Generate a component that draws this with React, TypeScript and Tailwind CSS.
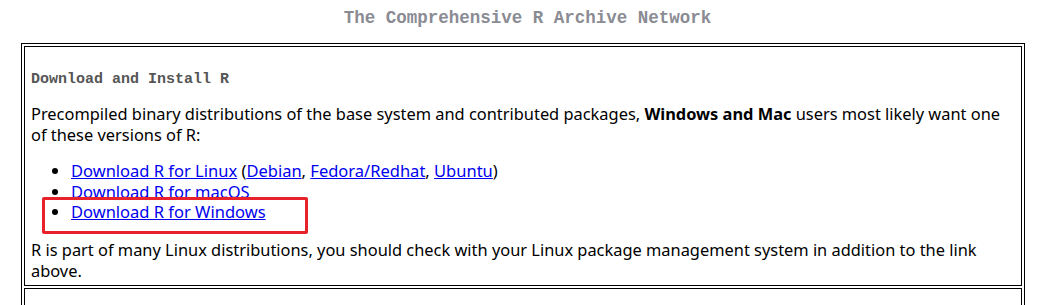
import React from "react"

const mono = "font-['Liberation_Mono','DejaVu_Sans_Mono',monospace]"
const sans = "font-['Noto_Sans','Open_Sans',sans-serif]"

const links = [
  { label: "Download R for Linux", extra: true },
  { label: "Download R for macOS" },
  { label: "Download R for Windows" },
]

function A({ children }: { children: React.ReactNode }) {
  return <a href="#" className="text-[#0000ee] underline">{children}</a>
}

export default function App() {
  return (
    <div className="min-h-screen bg-white text-black">
      <h1 className={`${mono} pt-[8px] text-center text-[17.5px] font-bold leading-[20px] text-[#8a8b93]`}>
        The Comprehensive R Archive Network
      </h1>

      <div className="ml-[21px] mt-[15px] w-[1004px] border border-black p-[2px]">
        <div className="relative border border-black px-[6px] pb-[4px] pt-[24px]">
          <h2 className={`${mono} text-[15px] font-bold leading-[18px] text-[#555]`}>
            Download and Install R
          </h2>

          <p className={`${sans} mt-[14px] text-[16.4px] leading-[21px]`}>
            Precompiled binary distributions of the base system and contributed packages,{" "}
            <b>Windows and Mac</b> users most likely want one of these versions of R:
          </p>

          <ul className={`${sans} mt-[16px] list-disc pl-[40px] text-[16.5px] leading-[20.5px]`}>
            {links.map((l) => (
              <li key={l.label}>
                <A>{l.label}</A>
                {l.extra && (
                  <>
                    {" "}(<A>Debian</A>, <A>Fedora/Redhat</A>, <A>Ubuntu</A>)
                  </>
                )}
              </li>
            ))}
          </ul>

          <p className={`${sans} mt-[16px] text-[16.4px] leading-[21px]`}>
            R is part of many Linux distributions, you should check with your Linux package
            management system in addition to the link above.
          </p>

          {/* annotation box */}
          <div className="pointer-events-none absolute left-[17px] top-[150px] h-[37px] w-[266px] rounded-[2px] border-[3px] border-[#e8212b]" />
        </div>
        <div className="mt-[2px] h-[40px] border border-black" />
      </div>
    </div>
  )
}
